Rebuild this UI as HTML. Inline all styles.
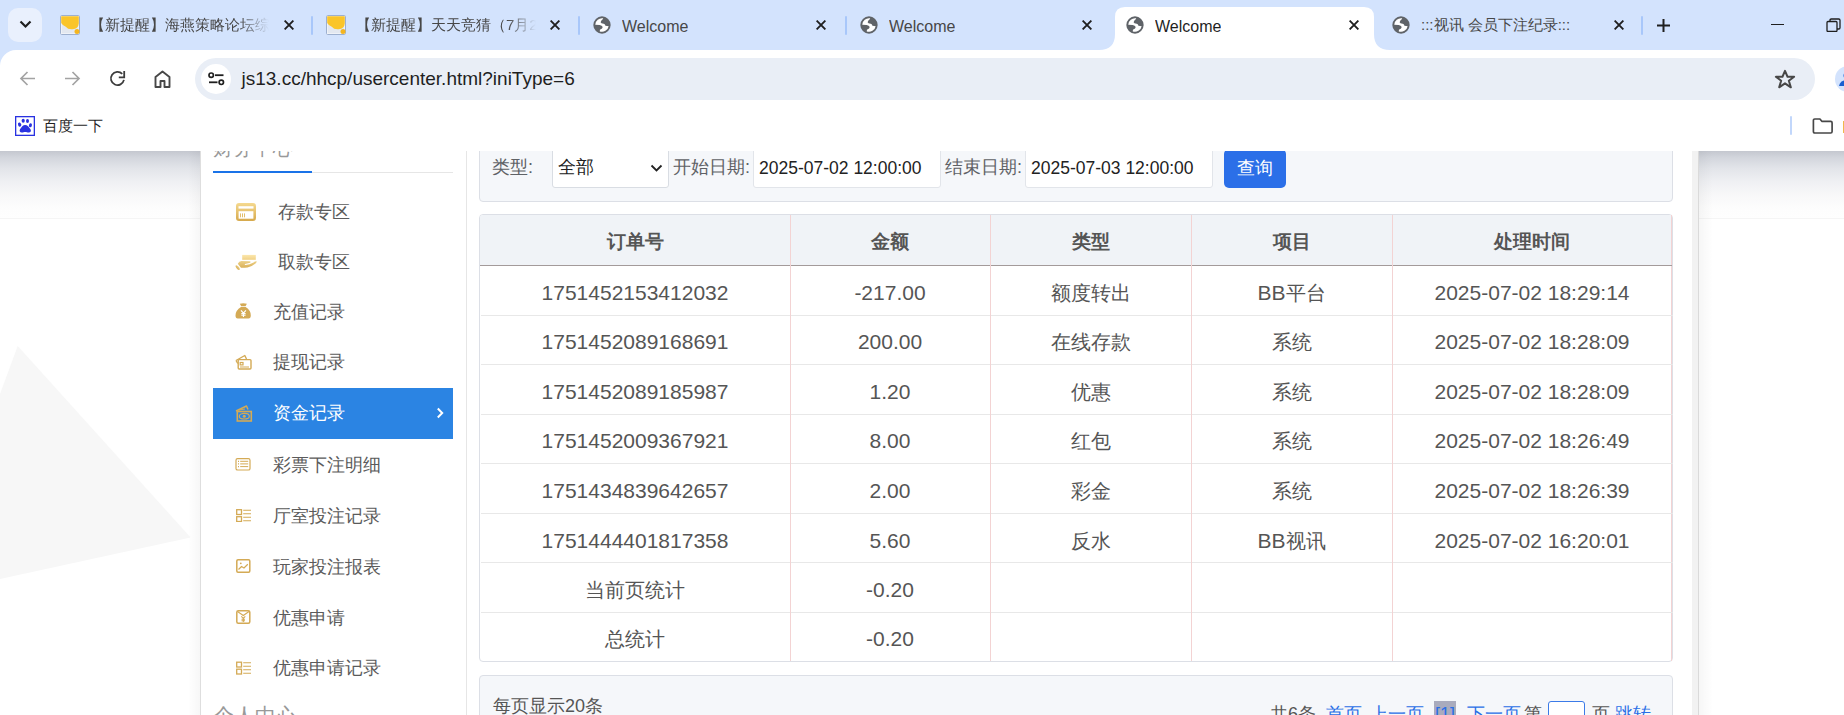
<!DOCTYPE html>
<html><head><meta charset="utf-8">
<style>
*{box-sizing:border-box;margin:0;padding:0}
html,body{width:1844px;height:715px;overflow:hidden;background:#fff;font-family:"Liberation Sans",sans-serif}
.a{position:absolute}
#ts{position:absolute;left:0;top:0;width:1844px;height:50px;background:#d3e3fd}
.tt{position:absolute;top:17px;height:21px;font-size:16px;color:#474747;white-space:nowrap;overflow:hidden;line-height:20px}
.fade{-webkit-mask-image:linear-gradient(to right,#000 84%,transparent 100%)}
.sep{position:absolute;top:16px;width:2px;height:19px;background:#a8c7fa;border-radius:1px}
.x{position:absolute;top:20px;width:10px;height:10px}
.gl{position:absolute;top:16px;width:18px;height:18px}
</style><style>
.mi{font-size:18px;line-height:24px;white-space:nowrap}
.fl{font-size:18px;line-height:24px;color:#5f6266;white-space:nowrap}
.fv{font-size:18px;line-height:24px;color:#222;white-space:nowrap}
.fd{font-size:17.5px;line-height:20px;color:#222;white-space:nowrap}
.th{font-size:19px;line-height:24px;font-weight:bold;color:#555;text-align:center;white-space:nowrap}
.td{font-size:21px;line-height:25px;color:#555;text-align:center;white-space:nowrap}
.cj{font-size:20px}
.pg{font-size:18px;line-height:24px;color:#555;white-space:nowrap}
.lk{color:#2a6fe6}
</style></head><body>
<div id="ts">
  <div class="a" style="left:8px;top:8px;width:34px;height:34px;border-radius:10px;background:#e9f0fd"></div>
  <svg class="a" style="left:19px;top:20px" width="13" height="9" viewBox="0 0 13 9"><path d="M1.5 1.5 L6.5 6.5 L11.5 1.5" fill="none" stroke="#1f1f1f" stroke-width="2.2"/></svg>
  <!-- tab1 -->
  <svg class="a" style="left:60px;top:15px" width="20" height="20" viewBox="0 0 20 20"><rect x="0.5" y="0.5" width="19" height="19" rx="1.2" fill="#fbfcfe" stroke="#9db0cf"/><rect x="1.5" y="1.5" width="17" height="17" fill="#e3e8f0"/><path d="M1.2 1.2 H18.8 V8.2 Q18.5 13.6 12.5 14.3 Q7.8 14.6 5.8 11.8 Q2.6 10.6 1.2 8 Z" fill="#fac52a"/><circle cx="17" cy="16.6" r="2.5" fill="#f4b51f"/></svg>
  <div class="tt fade" style="left:89.5px;width:179px;font-size:15px;top:15.2px">【新提醒】海燕策略论坛综合</div>
  <svg class="x" style="left:284px" viewBox="0 0 10 10"><path d="M0.6 0.6L9.4 9.4M9.4 0.6L0.6 9.4" stroke="#1f1f1f" stroke-width="1.9"/></svg>
  <div class="sep" style="left:311px"></div>
  <!-- tab2 -->
  <svg class="a" style="left:326px;top:15px" width="20" height="20" viewBox="0 0 20 20"><rect x="0.5" y="0.5" width="19" height="19" rx="1.2" fill="#fbfcfe" stroke="#9db0cf"/><rect x="1.5" y="1.5" width="17" height="17" fill="#e3e8f0"/><path d="M1.2 1.2 H18.8 V8.2 Q18.5 13.6 12.5 14.3 Q7.8 14.6 5.8 11.8 Q2.6 10.6 1.2 8 Z" fill="#fac52a"/><circle cx="17" cy="16.6" r="2.5" fill="#f4b51f"/></svg>
  <div class="tt fade" style="left:356px;width:180px;font-size:15px;top:15.2px">【新提醒】天天竞猜（7月2</div>
  <svg class="x" style="left:550px" viewBox="0 0 10 10"><path d="M0.6 0.6L9.4 9.4M9.4 0.6L0.6 9.4" stroke="#1f1f1f" stroke-width="1.9"/></svg>
  <div class="sep" style="left:578px"></div>
  <!-- tab3 -->
  <svg class="gl" style="left:593px;top:16px" width="18" height="18" viewBox="142 142 426 426"><circle cx="355" cy="355" r="205" fill="#5f6368"/><path fill="#fff" d="M195 348 A160 160 0 0 1 382 197 L 378 212 Q 332 238 322 292 Q 330 328 398 326 Q 432 342 436 374 L 513 384 A160 160 0 0 1 302 506 L 306 470 Q 372 444 372 405 Q 356 368 300 356 Z"/></svg>
  <div class="tt" style="left:622px">Welcome</div>
  <svg class="x" style="left:816px" viewBox="0 0 10 10"><path d="M0.6 0.6L9.4 9.4M9.4 0.6L0.6 9.4" stroke="#1f1f1f" stroke-width="1.9"/></svg>
  <div class="sep" style="left:845px"></div>
  <!-- tab4 -->
  <svg class="gl" style="left:860px;top:16px" width="18" height="18" viewBox="142 142 426 426"><circle cx="355" cy="355" r="205" fill="#5f6368"/><path fill="#fff" d="M195 348 A160 160 0 0 1 382 197 L 378 212 Q 332 238 322 292 Q 330 328 398 326 Q 432 342 436 374 L 513 384 A160 160 0 0 1 302 506 L 306 470 Q 372 444 372 405 Q 356 368 300 356 Z"/></svg>
  <div class="tt" style="left:889px">Welcome</div>
  <svg class="x" style="left:1082px" viewBox="0 0 10 10"><path d="M0.6 0.6L9.4 9.4M9.4 0.6L0.6 9.4" stroke="#1f1f1f" stroke-width="1.9"/></svg>
  <!-- active tab5 -->
  <svg class="a" style="left:1099px;top:7px" width="291" height="43" viewBox="0 0 291 43"><path d="M0 43 Q16 43 16 27 V10 Q16 0 26 0 H265 Q275 0 275 10 V27 Q275 43 291 43 Z" fill="#fff"/></svg>
  <svg class="gl" style="left:1126px;top:16px" width="18" height="18" viewBox="142 142 426 426"><circle cx="355" cy="355" r="205" fill="#5f6368"/><path fill="#fff" d="M195 348 A160 160 0 0 1 382 197 L 378 212 Q 332 238 322 292 Q 330 328 398 326 Q 432 342 436 374 L 513 384 A160 160 0 0 1 302 506 L 306 470 Q 372 444 372 405 Q 356 368 300 356 Z"/></svg>
  <div class="tt" style="left:1155px;color:#1f1f1f">Welcome</div>
  <svg class="x" style="left:1348.8px" viewBox="0 0 10 10"><path d="M0.6 0.6L9.4 9.4M9.4 0.6L0.6 9.4" stroke="#1f1f1f" stroke-width="1.9"/></svg>
  <!-- tab6 -->
  <svg class="gl" style="left:1392px;top:16px" width="18" height="18" viewBox="142 142 426 426"><circle cx="355" cy="355" r="205" fill="#5f6368"/><path fill="#fff" d="M195 348 A160 160 0 0 1 382 197 L 378 212 Q 332 238 322 292 Q 330 328 398 326 Q 432 342 436 374 L 513 384 A160 160 0 0 1 302 506 L 306 470 Q 372 444 372 405 Q 356 368 300 356 Z"/></svg>
  <div class="tt" style="left:1421px;font-size:15px;top:15.2px">:::视讯 会员下注纪录:::</div>
  <svg class="x" style="left:1614px" viewBox="0 0 10 10"><path d="M0.6 0.6L9.4 9.4M9.4 0.6L0.6 9.4" stroke="#1f1f1f" stroke-width="1.9"/></svg>
  <div class="sep" style="left:1641px"></div>
  <svg class="a" style="left:1656px;top:18px" width="15" height="15" viewBox="0 0 15 15"><path d="M7.5 1V14M1 7.5H14" stroke="#1f1f1f" stroke-width="2"/></svg>
  <div class="a" style="left:1771px;top:24px;width:13px;height:1.2px;background:#1f1f1f"></div>
  <svg class="a" style="left:1826px;top:18px" width="15" height="14" viewBox="0 0 15 14"><rect x="1" y="3.5" width="10" height="10" rx="1" fill="none" stroke="#1f1f1f" stroke-width="1.3"/><path d="M4 3.5V2.3Q4 1 5.3 1H12.7Q14 1 14 2.3V9.7Q14 11 12.7 11H11" fill="none" stroke="#1f1f1f" stroke-width="1.3"/></svg>
</div>
<div class="a" style="left:0;top:50px;width:1844px;height:101px;background:#fff"></div>
<div class="a" style="left:0;top:50px;width:16px;height:16px;background:#d3e3fd"></div>
<div class="a" style="left:0;top:50px;width:16px;height:16px;background:#fff;border-top-left-radius:16px"></div>
<!-- back -->
<svg class="a" style="left:19px;top:70px" width="17" height="17" viewBox="0 0 17 17"><path d="M16 8.5H2.5M8.5 2L2 8.5L8.5 15" fill="none" stroke="#a3a3a3" stroke-width="1.7"/></svg>
<svg class="a" style="left:64px;top:70px" width="17" height="17" viewBox="0 0 17 17"><path d="M1 8.5H14.5M8.5 2L15 8.5L8.5 15" fill="none" stroke="#a3a3a3" stroke-width="1.7"/></svg>
<!-- reload -->
<svg class="a" style="left:109px;top:70px" width="17" height="17" viewBox="0 0 17 17"><path d="M14.95 9.9A6.6 6.6 0 1 1 13.25 3.9" fill="none" stroke="#3c3c3c" stroke-width="1.8"/><path d="M15.2 0.9V7.4H9.8" fill="none" stroke="#3c3c3c" stroke-width="1.8"/></svg>
<!-- home -->
<svg class="a" style="left:154px;top:70px" width="17" height="18" viewBox="0 0 17 18"><path d="M1.5 17V7L8.5 1.5L15.5 7V17H10.5V11H6.5V17Z" fill="none" stroke="#474747" stroke-width="1.9" stroke-linejoin="round"/></svg>
<!-- omnibox -->
<div class="a" style="left:195px;top:58px;width:1620px;height:42px;border-radius:21px;background:#e9eef6"></div>
<div class="a" style="left:201px;top:64px;width:30px;height:30px;border-radius:15px;background:#fff"></div>
<svg class="a" style="left:208px;top:72px" width="17" height="14" viewBox="0 0 17 14"><circle cx="3.2" cy="3.2" r="2.2" fill="none" stroke="#1f1f1f" stroke-width="1.7"/><path d="M7 3.2H15.5" stroke="#1f1f1f" stroke-width="1.8"/><circle cx="13.3" cy="10.3" r="2.2" fill="none" stroke="#1f1f1f" stroke-width="1.7"/><path d="M1 10.3H9.5" stroke="#1f1f1f" stroke-width="1.8"/></svg>
<div class="a" style="left:241.5px;top:68px;font-size:19px;line-height:22px;color:#1f1f1f;white-space:nowrap">js13.cc/hhcp/usercenter.html?iniType=6</div>
<!-- star -->
<svg class="a" style="left:1774px;top:69px" width="22" height="21" viewBox="0 0 20 19"><path d="M10 1.6L12.3 7H18.3L13.5 10.6L15.3 16.6L10 13L4.7 16.6L6.5 10.6L1.7 7H7.7Z" fill="none" stroke="#474747" stroke-width="1.8" stroke-linejoin="round"/></svg>
<!-- avatar -->
<div class="a" style="left:1835px;top:66px;width:26px;height:26px;border-radius:13px;background:#d3e3fd"></div>
<svg class="a" style="left:1838px;top:70px" width="10" height="18" viewBox="0 0 10 18"><circle cx="9" cy="5.5" r="3.5" fill="#1a5fd0"/><path d="M1 16Q2 10 9 10V16Z" fill="#1a5fd0"/></svg>
<!-- bookmarks -->
<svg class="a" style="left:15px;top:116px" width="20" height="20" viewBox="0 0 20 20"><rect x="0.65" y="0.65" width="18.7" height="18.7" fill="#fff" stroke="#2932e1" stroke-width="1.3"/><g transform="translate(0 -0.8)"><ellipse cx="4.6" cy="9.4" rx="1.6" ry="2.1" transform="rotate(-15 4.6 9.4)" fill="#2932e1"/><ellipse cx="8.2" cy="5.5" rx="1.6" ry="2" fill="#2932e1"/><ellipse cx="12.5" cy="5.7" rx="1.5" ry="2" fill="#2932e1"/><ellipse cx="15.4" cy="10.1" rx="1.5" ry="2" transform="rotate(15 15.4 10.1)" fill="#2932e1"/><path d="M10.1 9.8C8 9.8 6.5 12 5 14C4 15.8 5 17.3 6.8 17.3C8.2 17.3 9 16.8 10.2 16.8C11.4 16.8 12.3 17.3 13.8 17.3C15.7 17.3 16.5 15.6 15.5 14C14 12 12.3 9.8 10.1 9.8Z" fill="#2932e1"/></g></svg>
<div class="a" style="left:43px;top:117px;font-size:15px;line-height:18px;color:#1f1f1f;white-space:nowrap">百度一下</div>
<div class="a" style="left:1790px;top:116px;width:2px;height:19px;background:#c2d7fb;border-radius:1px"></div>
<svg class="a" style="left:1812px;top:117.5px" width="21.5" height="16" viewBox="0 0 23 17"><path d="M1.5 2.5Q1.5 1 3 1H8.5L10.5 3.5H20Q21.5 3.5 21.5 5V14.5Q21.5 16 20 16H3Q1.5 16 1.5 14.5Z" fill="none" stroke="#474747" stroke-width="1.8" stroke-linejoin="round"/></svg>
<div class="a" style="left:1843px;top:121px;width:1px;height:12px;background:#f0b84a"></div>
<!-- page -->
<div class="a" style="left:0;top:151px;width:1844px;height:564px;background:#fff;overflow:hidden">
<div class="a" style="left:0;top:-151px;width:1844px;height:715px">
  <div class="a" style="left:0;top:151px;width:1844px;height:68px;background:linear-gradient(#c4c7cf 0%,#d3d6dd 10%,#e2e4e9 25%,#eff0f3 45%,#f8f8f9 65%,#fdfdfd 85%,#fefefe 100%)"></div>
  <div class="a" style="left:0;top:218px;width:1844px;height:1px;background:#f5f5f5"></div>
  <svg class="a" style="left:0;top:151px" width="200" height="564"><path d="M17.7 195 L190.6 386.5 L0 428 V243 Z" fill="#f7f7f7"/></svg>
  <!-- container -->
  <div class="a" style="left:188px;top:151px;width:12px;height:564px;background:linear-gradient(to left,rgba(0,0,0,0.03),rgba(0,0,0,0))"></div>
  <div class="a" style="left:200px;top:100px;width:1498px;height:615px;background:#fff;border-left:1px solid #dedede"></div>
  <div class="a" style="left:1692px;top:100px;width:6px;height:615px;background:#f2f2f2"></div>
  <div class="a" style="left:1698px;top:100px;width:1px;height:615px;background:#dadada"></div>
  <div class="a" style="left:1699px;top:151px;width:14px;height:564px;background:linear-gradient(to right,rgba(0,0,0,0.035),rgba(0,0,0,0))"></div>
  <div class="a" style="left:466px;top:100px;width:1px;height:615px;background:#e6e6e6"></div>
  <!-- sidebar -->
  <div class="a" style="left:213px;top:136px;font-size:20px;line-height:24px;color:#999;white-space:nowrap">财务中心</div>
  <div class="a" style="left:213px;top:172px;width:240px;height:1px;background:#e6e6e6"></div>
  <div class="a" style="left:213px;top:171px;width:99px;height:2px;background:#1a73e8"></div>
  <div class="a" style="left:213px;top:388px;width:240px;height:50.5px;background:#2b84e3"></div>
  <div class="a mi" style="left:278px;top:199.8px;color:#5b5b5b">存款专区</div>
  <svg class="a" style="left:236px;top:203px" width="20" height="18" viewBox="0 0 20 18"><defs><linearGradient id="gg" x1="0" y1="0" x2="0" y2="1"><stop offset="0" stop-color="#f5d98f"/><stop offset="1" stop-color="#d6a94c"/></linearGradient></defs><rect x="0" y="0" width="20" height="18" rx="3" fill="url(#gg)"/><rect x="2.5" y="3.2" width="15" height="2.4" fill="#fff"/><rect x="2.6" y="8.2" width="14.8" height="7.5" fill="#fff"/><path d="M4.5 10.4V14.3M6.5 10.4V14.3M8.5 10.4V14.3" stroke="#e3bd6a" stroke-width="1"/></svg>
  <div class="a mi" style="left:278px;top:249.5px;color:#5b5b5b">取款专区</div>
  <svg class="a" style="left:235px;top:254px" width="23" height="17" viewBox="0 0 23 17"><defs><linearGradient id="gh" x1="0" y1="0" x2="0" y2="1"><stop offset="0" stop-color="#fbe7ad"/><stop offset="1" stop-color="#f1d185"/></linearGradient><linearGradient id="gi" x1="0" y1="0" x2="0" y2="1"><stop offset="0" stop-color="#ecd088"/><stop offset="1" stop-color="#d9b057"/></linearGradient></defs><rect x="7.2" y="0.9" width="13.6" height="4.9" fill="url(#gh)"/><path d="M2.8 9.8Q4 7.2 6.5 7.1L14.8 7.2Q16 7.6 15.2 8.7L10 10.1Q9.3 10.9 10.5 10.9Q14.5 10.9 18.5 8.5Q20.5 7 21.5 7.3Q22 8.2 20.5 9.5Q17 12.5 12.5 13.4Q8.5 14 6 13.8Z" fill="url(#gi)"/><ellipse cx="2.7" cy="13.6" rx="2.9" ry="1.25" transform="rotate(50 2.7 13.6)" fill="url(#gi)"/></svg>
  <div class="a mi" style="left:273px;top:299.5px;color:#5b5b5b">充值记录</div>
  <svg class="a" style="left:235px;top:303px" width="17" height="17" viewBox="0 0 17 17"><path d="M4.8 0.8Q8.3 -0.3 11.9 0.8L10.5 3.3H6.2Z" fill="#d4aa55"/><path d="M6 4.1H10.7Q15.9 7.5 15.8 12.5Q15.8 15.4 13.5 15.4H2.7Q0.5 15.4 0.5 12.5Q0.5 7.5 6 4.1Z" fill="#d4aa55"/><path d="M6 7.3L8.45 10.2L10.9 7.3M8.45 10.2V14M6.3 10.5H10.6M6.3 12.1H10.6" fill="none" stroke="#fff" stroke-width="1.15"/></svg>
  <div class="a mi" style="left:273px;top:350.0px;color:#5b5b5b">提现记录</div>
  <svg class="a" style="left:235px;top:354px" width="17" height="16" viewBox="0 0 17 16"><path d="M1 6.5L9.8 1.5L11.5 5" fill="none" stroke="#d4aa55" stroke-width="1.4" stroke-linejoin="round"/><path d="M1 6.5L2.8 9.5" fill="none" stroke="#d4aa55" stroke-width="1.4"/><rect x="3.2" y="5.6" width="12.8" height="9.4" rx="1" fill="none" stroke="#d4aa55" stroke-width="1.4"/><rect x="5.2" y="8.5" width="2.8" height="2.4" fill="none" stroke="#d4aa55" stroke-width="1.2"/><path d="M5 13H14" stroke="#d4aa55" stroke-width="1"/></svg>
  <div class="a mi" style="left:273px;top:401.0px;color:#fff">资金记录</div>
  <svg class="a" style="left:235px;top:405px" width="18" height="17" viewBox="0 0 18 17"><path d="M1 6L11.5 1L13 4.5" fill="none" stroke="#d4aa55" stroke-width="1.5" stroke-linejoin="round"/><path d="M4 5L10 4" stroke="#d4aa55" stroke-width="1"/><rect x="2.3" y="6.5" width="14" height="9.5" fill="none" stroke="#d4aa55" stroke-width="1.6"/><ellipse cx="9.3" cy="11.2" rx="5" ry="2.8" fill="none" stroke="#d4aa55" stroke-width="1.2"/><circle cx="9.3" cy="11.2" r="1.5" fill="#d4aa55"/></svg>
  <div class="a mi" style="left:273px;top:452.5px;color:#5b5b5b">彩票下注明细</div>
  <svg class="a" style="left:235px;top:458px" width="16" height="13" viewBox="0 0 16 13"><rect x="1" y="0.6" width="14" height="11.4" rx="1.6" fill="none" stroke="#d4aa55" stroke-width="1.2"/><path d="M3 3.3H4M3 5.9H4M3 8.6H4" stroke="#d4aa55" stroke-width="1.2"/><path d="M5.2 3.3H13.2M5.2 5.9H13.2M5.2 8.6H13.2" stroke="#d4aa55" stroke-width="1"/></svg>
  <div class="a mi" style="left:273px;top:504.0px;color:#5b5b5b">厅室投注记录</div>
  <svg class="a" style="left:236px;top:509px" width="16" height="13" viewBox="0 0 16 13"><rect x="0.7" y="0.7" width="4.8" height="4.8" fill="none" stroke="#d4aa55" stroke-width="1.3"/><rect x="0.7" y="7.7" width="4.8" height="4.8" fill="none" stroke="#d4aa55" stroke-width="1.3"/><path d="M7.2 1.2H15M7.2 4.7H15M7.2 8.3H15M7.2 11.8H15" stroke="#d4aa55" stroke-width="1.1"/></svg>
  <div class="a mi" style="left:273px;top:555.0px;color:#5b5b5b">玩家投注报表</div>
  <svg class="a" style="left:236px;top:559px" width="15" height="14" viewBox="0 0 15 14"><rect x="0.8" y="0.8" width="13" height="12.4" rx="1.2" fill="none" stroke="#d4aa55" stroke-width="1.5"/><circle cx="4.8" cy="4.3" r="0.9" fill="#d4aa55"/><path d="M2.5 10.5L5.5 7.5L8 9L11.8 5.3" fill="none" stroke="#d4aa55" stroke-width="1.2"/></svg>
  <div class="a mi" style="left:273px;top:605.7px;color:#5b5b5b">优惠申请</div>
  <svg class="a" style="left:236px;top:610px" width="15" height="14" viewBox="0 0 15 14"><rect x="0.8" y="0.8" width="13" height="12.4" rx="1.5" fill="none" stroke="#d4aa55" stroke-width="1.5"/><path d="M1.5 1.5L7.3 5.5L13 1.5" fill="none" stroke="#d4aa55" stroke-width="1.1"/><path d="M5.3 6.3L7.3 8.3L9.3 6.3M7.3 8.3V12M5.5 9.3H9M5.5 10.8H9" fill="none" stroke="#d4aa55" stroke-width="1.1"/></svg>
  <div class="a mi" style="left:273px;top:656.0px;color:#5b5b5b">优惠申请记录</div>
  <svg class="a" style="left:236px;top:661px" width="16" height="14" viewBox="0 0 16 13"><rect x="0.7" y="0.7" width="4.8" height="4.8" fill="none" stroke="#d4aa55" stroke-width="1.3"/><rect x="0.7" y="7.7" width="4.8" height="4.8" fill="none" stroke="#d4aa55" stroke-width="1.3"/><path d="M7.2 1.2H15M7.2 4.7H15M7.2 8.3H15M7.2 11.8H15" stroke="#d4aa55" stroke-width="1.1"/></svg>
  <svg class="a" style="left:436px;top:407px" width="8" height="12" viewBox="0 0 8 12"><path d="M1.8 1.5L6.2 6L1.8 10.5" fill="none" stroke="#fff" stroke-width="2"/></svg>
  <div class="a" style="left:213px;top:704px;font-size:20.5px;line-height:24px;color:#999;white-space:nowrap">个人中心</div>
  <div class="a" style="left:479px;top:120px;width:1194px;height:82px;background:#f5f7fa;border:1px solid #dcdfe6;border-radius:4px"></div>
  <div class="a fl" style="left:492px;top:155px">类型:</div>
  <div class="a" style="left:552px;top:140px;width:117px;height:47.5px;background:#fff;border:1px solid #d9dde3;border-radius:3px"></div>
  <div class="a fv" style="left:558px;top:155px">全部</div>
  <svg class="a" style="left:650px;top:164px" width="13" height="9" viewBox="0 0 13 9"><path d="M1.5 1.5L6.5 6.5L11.5 1.5" fill="none" stroke="#222" stroke-width="1.8"/></svg>
  <div class="a fl" style="left:673px;top:155px">开始日期:</div>
  <div class="a" style="left:753px;top:140px;width:188px;height:47.5px;background:#fff;border:1px solid #e2e5ea;border-radius:3px"></div>
  <div class="a fd" style="left:759px;top:158px">2025-07-02 12:00:00</div>
  <div class="a fl" style="left:945px;top:155px">结束日期:</div>
  <div class="a" style="left:1025px;top:140px;width:188px;height:47.5px;background:#fff;border:1px solid #e2e5ea;border-radius:3px"></div>
  <div class="a fd" style="left:1031px;top:158px">2025-07-03 12:00:00</div>
  <div class="a" style="left:1224px;top:149px;width:62px;height:39px;background:#2b6fe8;border-radius:5px"></div>
  <div class="a fl" style="left:1237px;top:156px;color:#fff">查询</div>
  <div class="a" style="left:479px;top:214px;width:1194px;height:448px;background:#fff;border:1px solid #dcdfe6;border-radius:4px;overflow:hidden">
  <div class="a" style="left:0;top:0;width:1192px;height:51px;background:#f0f3f7"></div>
  </div>
  <div class="a" style="left:1671px;top:215px;width:1px;height:446px;background:#f3d3d3"></div>
  <div class="a" style="left:480px;top:265px;width:1192px;height:1px;background:#a39a9a"></div>
  <div class="a" style="left:481px;top:315px;width:1192px;height:1px;background:#e8e8e8"></div>
  <div class="a" style="left:481px;top:364px;width:1192px;height:1px;background:#e8e8e8"></div>
  <div class="a" style="left:481px;top:414px;width:1192px;height:1px;background:#e8e8e8"></div>
  <div class="a" style="left:481px;top:463px;width:1192px;height:1px;background:#e8e8e8"></div>
  <div class="a" style="left:481px;top:513px;width:1192px;height:1px;background:#e8e8e8"></div>
  <div class="a" style="left:481px;top:562px;width:1192px;height:1px;background:#e8e8e8"></div>
  <div class="a" style="left:481px;top:612px;width:1192px;height:1px;background:#e8e8e8"></div>
  <div class="a" style="left:790px;top:215px;width:1px;height:446px;background:#f3d3d3"></div>
  <div class="a" style="left:990px;top:215px;width:1px;height:446px;background:#f3d3d3"></div>
  <div class="a" style="left:1191px;top:215px;width:1px;height:446px;background:#f3d3d3"></div>
  <div class="a" style="left:1392px;top:215px;width:1px;height:446px;background:#f3d3d3"></div>
  <div class="a th" style="left:480px;width:310px;top:229.5px">订单号</div>
  <div class="a th" style="left:790px;width:200px;top:229.5px">金额</div>
  <div class="a th" style="left:990px;width:201px;top:229.5px">类型</div>
  <div class="a th" style="left:1191px;width:201px;top:229.5px">项目</div>
  <div class="a th" style="left:1392px;width:280px;top:229.5px">处理时间</div>
  <div class="a td" style="left:480px;width:310px;top:279.6px">1751452153412032</div>
  <div class="a td" style="left:790px;width:200px;top:279.6px">-217.00</div>
  <div class="a td" style="left:990px;width:201px;top:279.6px"><span class="cj">额度转出</span></div>
  <div class="a td" style="left:1191px;width:201px;top:279.6px">BB<span class="cj">平台</span></div>
  <div class="a td" style="left:1392px;width:280px;top:279.6px">2025-07-02 18:29:14</div>
  <div class="a td" style="left:480px;width:310px;top:329.2px">1751452089168691</div>
  <div class="a td" style="left:790px;width:200px;top:329.2px">200.00</div>
  <div class="a td" style="left:990px;width:201px;top:329.2px"><span class="cj">在线存款</span></div>
  <div class="a td" style="left:1191px;width:201px;top:329.2px"><span class="cj">系统</span></div>
  <div class="a td" style="left:1392px;width:280px;top:329.2px">2025-07-02 18:28:09</div>
  <div class="a td" style="left:480px;width:310px;top:378.7px">1751452089185987</div>
  <div class="a td" style="left:790px;width:200px;top:378.7px">1.20</div>
  <div class="a td" style="left:990px;width:201px;top:378.7px"><span class="cj">优惠</span></div>
  <div class="a td" style="left:1191px;width:201px;top:378.7px"><span class="cj">系统</span></div>
  <div class="a td" style="left:1392px;width:280px;top:378.7px">2025-07-02 18:28:09</div>
  <div class="a td" style="left:480px;width:310px;top:428.3px">1751452009367921</div>
  <div class="a td" style="left:790px;width:200px;top:428.3px">8.00</div>
  <div class="a td" style="left:990px;width:201px;top:428.3px"><span class="cj">红包</span></div>
  <div class="a td" style="left:1191px;width:201px;top:428.3px"><span class="cj">系统</span></div>
  <div class="a td" style="left:1392px;width:280px;top:428.3px">2025-07-02 18:26:49</div>
  <div class="a td" style="left:480px;width:310px;top:478.1px">1751434839642657</div>
  <div class="a td" style="left:790px;width:200px;top:478.1px">2.00</div>
  <div class="a td" style="left:990px;width:201px;top:478.1px"><span class="cj">彩金</span></div>
  <div class="a td" style="left:1191px;width:201px;top:478.1px"><span class="cj">系统</span></div>
  <div class="a td" style="left:1392px;width:280px;top:478.1px">2025-07-02 18:26:39</div>
  <div class="a td" style="left:480px;width:310px;top:527.5px">1751444401817358</div>
  <div class="a td" style="left:790px;width:200px;top:527.5px">5.60</div>
  <div class="a td" style="left:990px;width:201px;top:527.5px"><span class="cj">反水</span></div>
  <div class="a td" style="left:1191px;width:201px;top:527.5px">BB<span class="cj">视讯</span></div>
  <div class="a td" style="left:1392px;width:280px;top:527.5px">2025-07-02 16:20:01</div>
  <div class="a td" style="left:480px;width:310px;top:576.8px"><span class="cj">当前页统计</span></div>
  <div class="a td" style="left:790px;width:200px;top:576.8px">-0.20</div>
  <div class="a td" style="left:480px;width:310px;top:625.9px"><span class="cj">总统计</span></div>
  <div class="a td" style="left:790px;width:200px;top:625.9px">-0.20</div>
  <div class="a" style="left:479px;top:675px;width:1194px;height:80px;background:#f5f7fa;border:1px solid #dcdfe6;border-radius:4px"></div>
  <div class="a pg" style="left:493px;top:694px">每页显示20条</div>
  <div class="a pg" style="left:1270px;top:701.5px">共6条</div>
  <div class="a pg lk" style="left:1326px;top:701.5px">首页</div>
  <div class="a pg lk" style="left:1370px;top:701.5px">上一页</div>
  <div class="a" style="left:1434px;top:701px;width:22px;height:20px;background:#a9abbd"></div>
  <div class="a pg lk" style="left:1435px;top:701.5px">[1]</div>
  <div class="a pg lk" style="left:1467px;top:701.5px">下一页</div>
  <div class="a pg" style="left:1524px;top:701.5px">第</div>
  <div class="a" style="left:1548px;top:701px;width:37px;height:30px;background:#fff;border:1px solid #3b7be8;border-radius:3px"></div>
  <div class="a pg" style="left:1592px;top:701.5px">页</div>
  <div class="a pg lk" style="left:1615px;top:701.5px">跳转</div>
</div>
</div>
</body></html>
